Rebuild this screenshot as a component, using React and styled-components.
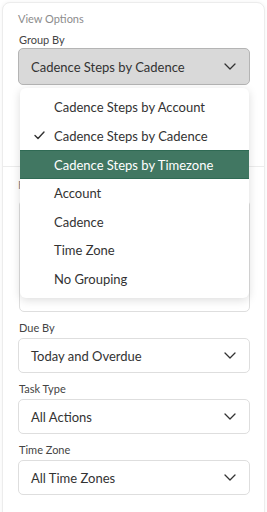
import styled, { createGlobalStyle } from "styled-components";

const GlobalStyle = createGlobalStyle`
    html, body {
        margin: 0;
        padding: 0;
        background: #ffffff;
        font-family: 'Lato', 'Liberation Sans', sans-serif;
    }
`;

const groupOptions = [
    "Cadence Steps by Account",
    "Cadence Steps by Cadence",
    "Cadence Steps by Timezone",
    "Account",
    "Cadence",
    "Time Zone",
    "No Grouping",
];

function Chevron () {
    return (
        <svg width="12" height="7" viewBox="0 0 12 7" fill="none">
            <path d="M1 1 L6 6 L11 1" stroke="#333" strokeWidth="1.3" strokeLinecap="round" strokeLinejoin="round" />
        </svg>
    );
}

function Check () {
    return (
        <svg width="11" height="9" viewBox="0 0 11 9" fill="none">
            <path d="M1 4.5 L4 7.5 L10 1" stroke="#333" strokeWidth="1.4" strokeLinecap="round" strokeLinejoin="round" />
        </svg>
    );
}

function Select ({ value, open }) {
    return (
        <SelectBox open={open}>
            <span>{value}</span>
            <Chevron />
        </SelectBox>
    );
}

export default function App () {

    const selected = "Cadence Steps by Cadence";
    const hovered = "Cadence Steps by Timezone";

    return (
        <>
            <GlobalStyle />
            <Card>
                <Section top={10} bottom={81}>
                    <SectionTitle>View Options</SectionTitle>
                    <Field tight>
                        <Label>Group By</Label>
                        <SelectWrap>
                            <Select value={selected} open />
                            <Menu>
                                {groupOptions.map(option => (
                                    <MenuItem key={option} active={option === hovered}>
                                        <CheckSlot>{option === selected && <Check />}</CheckSlot>
                                        {option}
                                    </MenuItem>
                                ))}
                            </Menu>
                        </SelectWrap>
                    </Field>
                </Section>
                <Divider />
                <Section top={12} bottom={0}>
                    <SectionTitle>Filters</SectionTitle>
                    <FilterBox />
                    <Field>
                        <Label>Due By</Label>
                        <Select value="Today and Overdue" />
                    </Field>
                    <Field>
                        <Label>Task Type</Label>
                        <Select value="All Actions" />
                    </Field>
                    <Field>
                        <Label>Time Zone</Label>
                        <Select value="All Time Zones" />
                    </Field>
                </Section>
            </Card>
        </>
    );
}

const Card = styled.div`
    margin: 2px 2px 0 2px;
    height: 530px;
    border: 1px solid #ececec;
    border-radius: 8px;
    box-shadow: 0 0 4px rgba(0, 0, 0, 0.05);
    background: #ffffff;
    box-sizing: border-box;
    overflow: hidden;
`;

const Section = styled.div`
    display: flex;
    flex-direction: column;
    gap: 10px;
    padding: ${p => p.top}px 14px ${p => p.bottom}px 15px;
`;

const SectionTitle = styled.div`
    font-size: 11px;
    color: #8c8c8c;
    line-height: 12px;
    height: 11px;
`;

const Field = styled.div`
    display: flex;
    flex-direction: column;
    gap: ${p => p.tight ? "2px" : "4px"};
`;

const Label = styled.div`
    font-size: 11px;
    color: #444;
    line-height: 12px;
    padding-left: 1px;
`;

const SelectWrap = styled.div`
    position: relative;
`;

const SelectBox = styled.div`
    height: ${p => p.open ? "37px" : "35px"};
    box-sizing: border-box;
    display: flex;
    align-items: center;
    justify-content: space-between;
    padding: 0 13px 0 12px;
    border: 1px solid ${p => p.open ? "#b4b4b4" : "#dedede"};
    border-radius: 5px;
    background: ${p => p.open ? "#d9d9d9" : "#ffffff"};
    font-size: 13px;
    color: #333;
`;

const FilterBox = styled.div`
    height: 112px;
    box-sizing: border-box;
    margin-left: 1px;
    border: 1px solid #dedede;
    border-radius: 5px;
`;

const Menu = styled.div`
    position: absolute;
    top: 40px;
    left: 2px;
    right: 1px;
    z-index: 2;
    background: #ffffff;
    border-radius: 6px;
    padding: 5px 0 5px 0;
    box-shadow: 0 2px 10px rgba(0, 0, 0, 0.14);
`;

const MenuItem = styled.div`
    height: ${p => p.active ? "29px" : "28.5px"};
    box-sizing: border-box;
    display: flex;
    align-items: center;
    font-size: 13px;
    color: ${p => p.active ? "#ffffff" : "#333"};
    background: ${p => p.active ? "#417762" : "transparent"};
    border-top: ${p => p.active ? "1px solid #2f6a54" : "none"};
    border-bottom: ${p => p.active ? "1px solid #2f6a54" : "none"};
`;

const CheckSlot = styled.span`
    width: 34px;
    display: flex;
    justify-content: flex-end;
    padding-right: 9px;
    box-sizing: border-box;
    flex-shrink: 0;
`;

const Divider = styled.div`
    height: 1px;
    background: #ececec;
`;
